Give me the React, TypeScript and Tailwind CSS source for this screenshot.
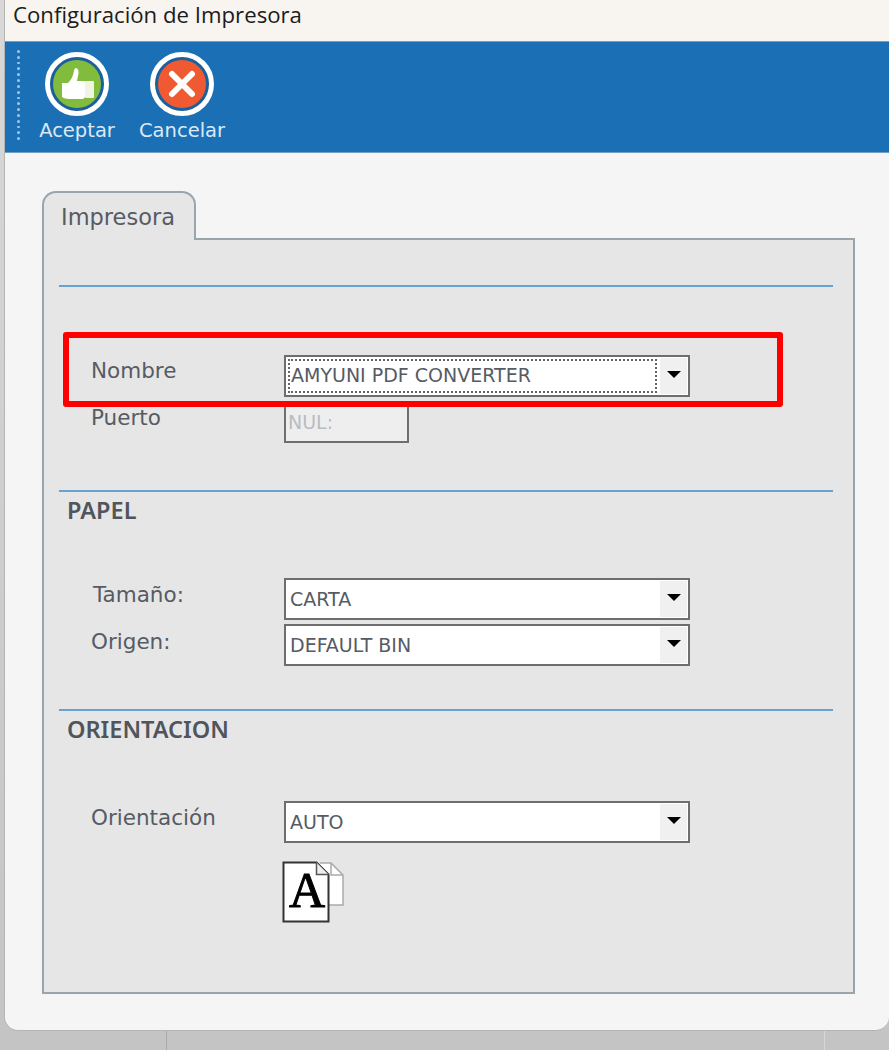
import React from 'react'

function Toolbar() {
  return (
    <div className="flex h-[112px] border-y border-[#6f9fc8] bg-[#1b70b5]">
      {/* grip */}
      <div className="ml-[12px] mt-[8px] flex h-[90px] w-[4px] flex-col gap-[3px]">
        {Array.from({ length: 16 }).map((_, i) => (
          <div key={i} className="h-[3px] w-[3px] rounded-full bg-[#a3c6e3]" />
        ))}
      </div>
      <div className="ml-[15px] flex w-[82px] flex-col items-center pt-[10px]">
        <div className="flex h-[64px] w-[64px] items-center justify-center rounded-full border-[5px] border-white bg-[#1b5f9c]">
          <svg width="48" height="48" viewBox="0 0 48 48">
            <circle cx="24" cy="24" r="24" fill="#82bc3c" />
            <path
              d="M9 23h6c2-2 4-5 5-8 1-3 1-7 3-7 3 1 3 5 2 8l-1 5h7c2 0 2 2 2 4l-1 11c0 2-1 3-3 3H16c-3 0-5-1-7-2z"
              fill="#fff"
            />
            <rect x="32" y="21" width="9" height="17" rx="1" fill="#eef5e4" />
          </svg>
        </div>
        <span className="mt-[3px] whitespace-nowrap text-[19.5px] leading-[24px] text-[#dce9f5]">Aceptar</span>
      </div>
      <div className="ml-[21px] flex w-[86px] flex-col items-center pt-[10px]">
        <div className="flex h-[64px] w-[64px] items-center justify-center rounded-full border-[5px] border-white bg-[#1b5f9c]">
          <svg width="48" height="48" viewBox="0 0 48 48">
            <circle cx="24" cy="24" r="24" fill="#f05a33" />
            <path d="M14 14l20 20M34 14L14 34" stroke="#fff" strokeWidth="6" strokeLinecap="round" />
          </svg>
        </div>
        <span className="mt-[3px] whitespace-nowrap text-[19.5px] leading-[24px] text-[#dce9f5]">Cancelar</span>
      </div>
    </div>
  )
}

function Select({ value, focused }: { value: string; focused?: boolean }) {
  return (
    <div className="flex h-[42px] w-[406px] items-stretch border-2 border-[#6e6e6e] bg-white">
      <div
        className={
          focused
            ? 'm-[2px] flex flex-1 items-center border-2 border-dotted border-[#666] pb-[2px] pl-[1px]'
            : 'flex flex-1 items-center pl-[4px] pt-[1px]'
        }
      >
        <span className="text-[19px] text-[#565b64]">{value}</span>
      </div>
      <div className="m-[1px] flex w-[27px] items-center justify-center bg-[#f0f0f0]">
        <div className="mb-[4px] h-0 w-0 border-x-[7px] border-t-[7px] border-x-transparent border-t-black" />
      </div>
    </div>
  )
}

function Row({
  label,
  className,
  labelClass,
  children,
}: {
  label: string
  className?: string
  labelClass?: string
  children: React.ReactNode
}) {
  return (
    <div className={`flex items-start ${className ?? ''}`}>
      <span className={`w-[225px] text-[21.5px] leading-[36px] text-[#565b64] ${labelClass ?? '-mt-[1px] pl-[32px]'}`}>
        {label}
      </span>
      {children}
    </div>
  )
}

function PageIcon() {
  return (
    <svg width="63" height="62" viewBox="0 0 63 62" className="ml-[-2px] mt-[18px]">
      <path d="M38 2h11l12 12v30H46" fill="#fff" stroke="#aaa" strokeWidth="1.5" />
      <path d="M49 2v12h12" fill="none" stroke="#aaa" strokeWidth="1.5" />
      <path d="M1.5 1.5h33l12 12v47h-45z" fill="#fff" stroke="#333" strokeWidth="2" />
      <path d="M34.500 1.500v12h12" fill="#eee" stroke="#555" strokeWidth="1.500" />
      <text
        x="25"
        y="46"
        textAnchor="middle"
        fontFamily="Liberation Serif, serif"
        fontSize="50"
        fill="#000"
        stroke="#000"
        strokeWidth="1"
      >
        A
      </text>
    </svg>
  )
}

export default function App() {
  return (
    <div className="relative h-[1050px] w-[889px] overflow-hidden bg-gradient-to-b from-[#d8d8d8] to-[#c4c4c4] font-['DejaVu_Sans',sans-serif]">
      {/* what shows of the sheet behind the window */}
      <div className="absolute bottom-0 left-[166px] h-[20px] w-[1px] bg-[#a9a9a9]" />
      <div className="absolute bottom-0 left-[824px] h-[20px] w-[1px] bg-[#d6d6d6]" />

      <div className="relative ml-[4px] flex h-[1031px] flex-col rounded-b-[14px] border-l border-b border-[#b5b5b5] bg-[#f5f5f5]">
        {/* Title */}
        <div className="flex h-[41px] shrink-0 items-center bg-[#f8f4f0] pb-[12px] pl-[8px] font-['Open_Sans',sans-serif] text-[22.2px] text-[#1c1c1c]">
          Configuración de Impresora
        </div>
        <Toolbar />

        {/* Tab */}
        <div className="relative z-10 ml-[37px] mt-[38px] flex h-[49px] w-[154px] items-start rounded-t-[14px] border-2 border-b-0 border-[#9aa5ab] bg-[#e6e6e6] pl-[17px] pt-[6px] text-[22.5px] leading-[36px] text-[#565b64]">
          Impresora
        </div>

        {/* Panel */}
        <div className="ml-[37px] -mt-[2px] h-[756px] w-[813px] border-2 border-[#9aa5ab] bg-[#e6e6e6] pl-[15px] pr-[20px]">
          <div className="mt-[45px] h-[2px] bg-[#69a1cf]" />
          <Row label="Nombre" className="mt-[68px]" labelClass="-mt-[2px] pl-[32px]">
            <Select value="AMYUNI PDF CONVERTER" focused />
          </Row>
          <Row label="Puerto" className="mt-[4px]">
            <div className="flex h-[42px] w-[125px] items-center border-2 border-[#6e6e6e] bg-[#eeeeee] pl-[2px] text-[19px] text-[#b9bcc2]">
              NUL:
            </div>
          </Row>

          <div className="mt-[47px] h-[2px] bg-[#69a1cf]" />
          <div className="ml-[8px] mt-[1px] font-['Noto_Sans',sans-serif] text-[23.5px] font-semibold leading-[34px] text-[#50555c]">PAPEL</div>
          <Row label="Tamaño:" className="mt-[51px]" labelClass="-mt-[1px] pl-[34px]">
            <Select value="CARTA" />
          </Row>
          <Row label="Origen:" className="mt-[4px]" labelClass="pl-[32px]">
            <Select value="DEFAULT BIN" />
          </Row>

          <div className="mt-[43px] h-[2px] bg-[#69a1cf]" />
          <div className="ml-[8px] mt-[1px] font-['Noto_Sans',sans-serif] text-[23.5px] font-semibold leading-[34px] text-[#50555c]">ORIENTACION</div>
          <Row label="Orientación" className="mt-[55px]">
            <div className="flex flex-col">
              <Select value="AUTO" />
              <PageIcon />
            </div>
          </Row>
        </div>
      </div>

      {/* Red highlight */}
      <div className="absolute left-[63px] top-[332px] h-[75px] w-[720px] rounded-[3px] border-[6px] border-[#ff0000]" />
    </div>
  )
}
